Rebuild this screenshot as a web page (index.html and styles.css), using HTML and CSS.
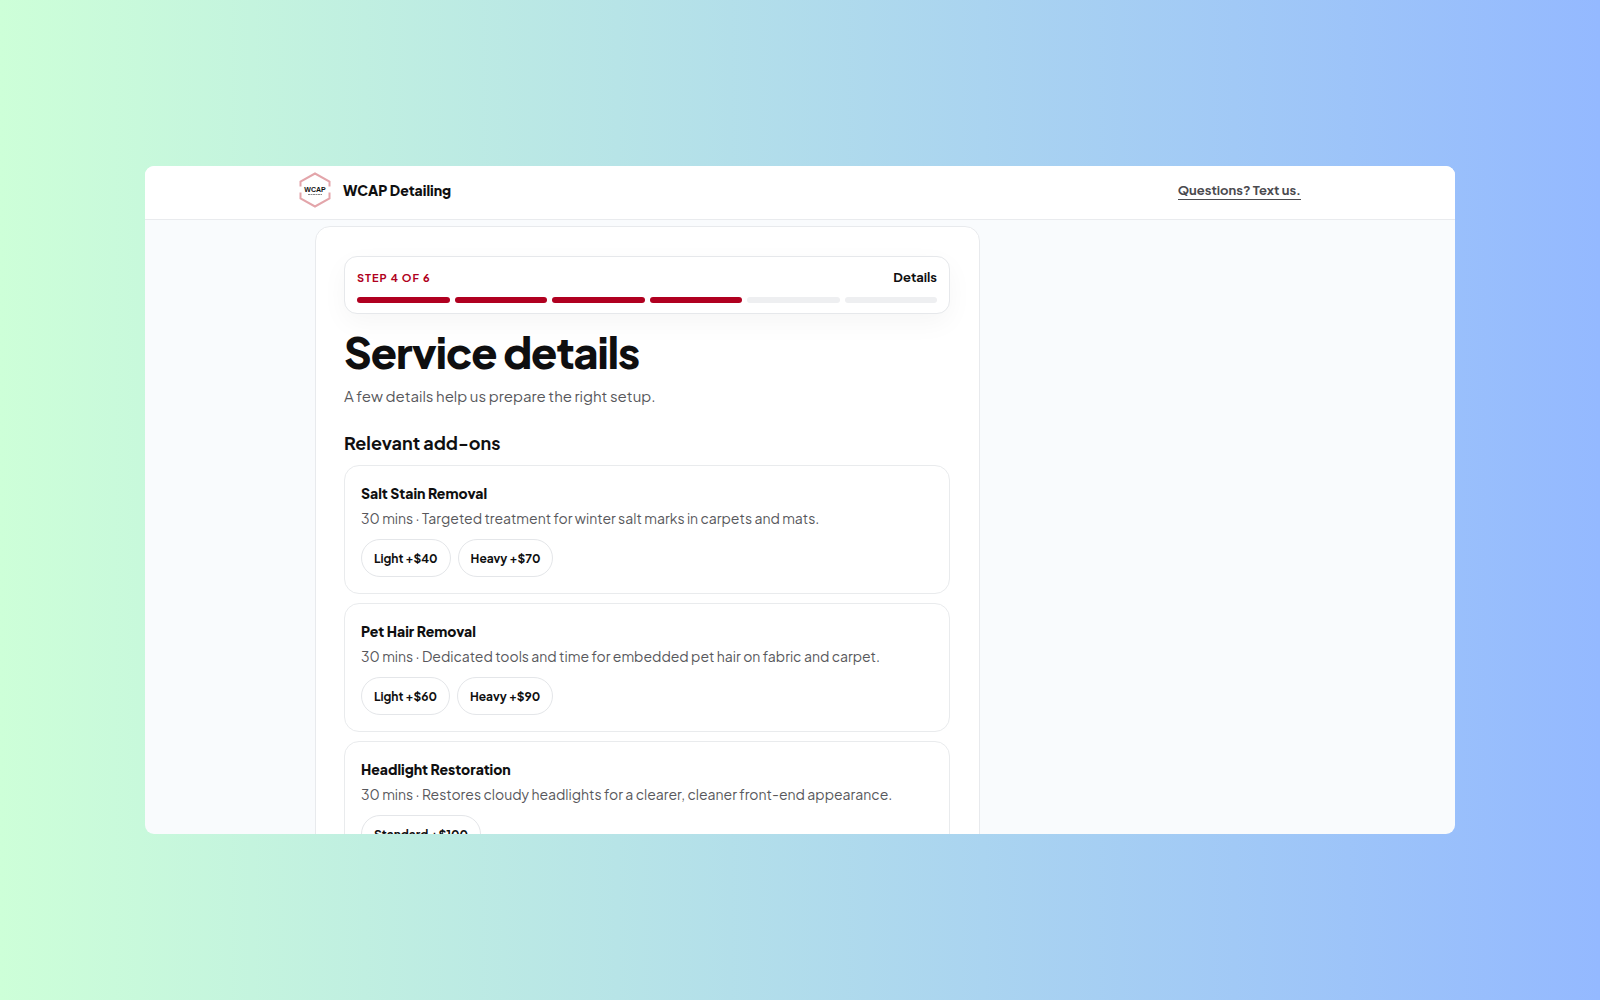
FILE: index.html
```html
<!DOCTYPE html>
<html lang="en">
<head>
    <meta charset="UTF-8">
    <meta name="viewport" content="width=device-width, initial-scale=1.0">
    <title>WCAP Detailing</title>
    <link rel="stylesheet" href="styles.css">
</head>
<body>
    <div class="window">
        <header class="header">
            <div class="header-inner">
                <div class="brand">
                    <svg class="logo" viewBox="0 0 32 36" aria-hidden="true">
                        <g fill="none" stroke="#e3a5aa" stroke-width="2">
                            <path d="M1.500 14.500V9.500L16 1.500L30.500 9.500V14.500"/>
                            <path d="M1.500 20.500V26.500L16 34.500L30.500 26.500V20.500"/>
                        </g>
                        <text x="16" y="19.500" class="logo-text">WCAP</text>
                        <path d="M9 22.500H23" stroke="#888" stroke-width="1" stroke-dasharray="2 0.500"/>
                    </svg>
                    <span class="brand-name">WCAP Detailing</span>
                </div>
                <a href="#" class="help-link">Questions? Text us.</a>
            </div>
        </header>

        <main class="layout">
            <section class="panel">
                <div class="progress">
                    <div class="progress-top">
                        <span class="step">Step 4 of 6</span>
                        <span class="step-name">Details</span>
                    </div>
                    <div class="bars">
                        <div class="bar done"></div>
                        <div class="bar done"></div>
                        <div class="bar done"></div>
                        <div class="bar done"></div>
                        <div class="bar"></div>
                        <div class="bar"></div>
                    </div>
                </div>

                <h1>Service details</h1>
                <p class="intro">A few details help us prepare the right setup.</p>

                <h2>Relevant add-ons</h2>
                <div class="addons">
                    <article class="addon">
                        <h3>Salt Stain Removal</h3>
                        <p>30 mins · Targeted treatment for winter salt marks in carpets and mats.</p>
                        <div class="options">
                            <button type="button">Light +$40</button>
                            <button type="button">Heavy +$70</button>
                        </div>
                    </article>
                    <article class="addon">
                        <h3>Pet Hair Removal</h3>
                        <p>30 mins · Dedicated tools and time for embedded pet hair on fabric and carpet.</p>
                        <div class="options">
                            <button type="button">Light +$60</button>
                            <button type="button">Heavy +$90</button>
                        </div>
                    </article>
                    <article class="addon">
                        <h3>Headlight Restoration</h3>
                        <p>30 mins · Restores cloudy headlights for a clearer, cleaner front-end appearance.</p>
                        <div class="options">
                            <button type="button">Standard +$100</button>
                        </div>
                    </article>
                </div>
            </section>
        </main>
    </div>
</body>
</html>
```
FILE: styles.css
```css
*{
    box-sizing: border-box;
}
body{
    margin: 0;
    height: 100vh;
    padding: 166px 145px;
    display: flex;
    background: linear-gradient(90deg, #cdffd8, #94b9ff);
    font-family: 'Plus Jakarta Sans', Inter, sans-serif;
    color: #0f0f10;
}
h1, h2, h3, p{
    margin: 0;
}
.window{
    flex: 1;
    min-width: 0;
    overflow: hidden;
    border-radius: 9px;
    background: #f9fbfd;
}
.header{
    background: #fff;
    border-bottom: 1px solid #e9ebee;
}
.header-inner{
    display: flex;
    align-items: center;
    justify-content: space-between;
    max-width: 1002px;
    margin: 0 auto;
    padding: 6px 0 11px;
}
.brand{
    display: flex;
    align-items: center;
    gap: 12px;
}
.logo{
    width: 32px;
    height: 36px;
}
.logo-text{
    font-family: 'Liberation Sans', sans-serif;
    font-size: 7px;
    font-weight: 700;
    text-anchor: middle;
    fill: #111;
}
.brand-name{
    font-size: 14px;
    line-height: 18px;
    font-weight: 800;
}
.help-link{
    font-size: 13px;
    line-height: 18px;
    font-weight: 700;
    color: #4b4b4f;
    text-decoration: none;
    border-bottom: 1px solid #4b4b4f;
}
.layout{
    display: grid;
    grid-template-columns: minmax(0, 1fr) 280px;
    gap: 25px;
    max-width: 1002px;
    margin: 0 auto;
    padding: 6px 16px;
}
.panel{
    padding: 29px 29px 29px 28px;
    background: #fff;
    border: 1px solid #e8eaed;
    border-radius: 15px;
}
.progress{
    padding: 12px 12px 10px;
    margin-bottom: 13px;
    background: #fff;
    border: 1px solid #e6e8eb;
    border-radius: 13px;
    box-shadow: 0 9px 27px rgba(0, 0, 0, 0.04);
}
.progress-top{
    display: flex;
    align-items: center;
    justify-content: space-between;
    margin-bottom: 11px;
    line-height: 17px;
}
.step{
    font-size: 11px;
    font-weight: 700;
    letter-spacing: 1px;
    text-transform: uppercase;
    color: #b00020;
}
.step-name{
    font-size: 13px;
    font-weight: 700;
}
.bars{
    display: flex;
    gap: 5px;
}
.bar{
    flex: 1;
    height: 6px;
    border-radius: 3px;
    background: #eeeff1;
}
.bar.done{
    background: #b00020;
}
h1{
    font-size: 43px;
    line-height: 50px;
    font-weight: 800;
    letter-spacing: -1px;
}
.intro{
    margin-top: 7px;
    font-size: 15px;
    line-height: 24px;
    font-weight: 400;
    color: #58585c;
}
h2{
    margin-top: 22px;
    margin-bottom: 9px;
    font-size: 18px;
    line-height: 26px;
    font-weight: 700;
}
.addons{
    display: grid;
    gap: 9px;
}
.addon{
    padding: 16px;
    border: 1px solid #e9ebed;
    border-radius: 15px;
}
.addon h3{
    font-size: 14px;
    line-height: 23px;
    font-weight: 800;
}
.addon p{
    margin-top: 2px;
    font-size: 14px;
    line-height: 23px;
    font-weight: 400;
    color: #58585c;
}
.options{
    display: flex;
    gap: 7px;
    margin-top: 9px;
}
.options button{
    height: 38px;
    padding: 0 12px;
    border: 1px solid #e4e6e9;
    border-radius: 19px;
    background: #fff;
    font-family: inherit;
    font-size: 12px;
    font-weight: 700;
    color: #0f0f10;
    cursor: pointer;
}
```
